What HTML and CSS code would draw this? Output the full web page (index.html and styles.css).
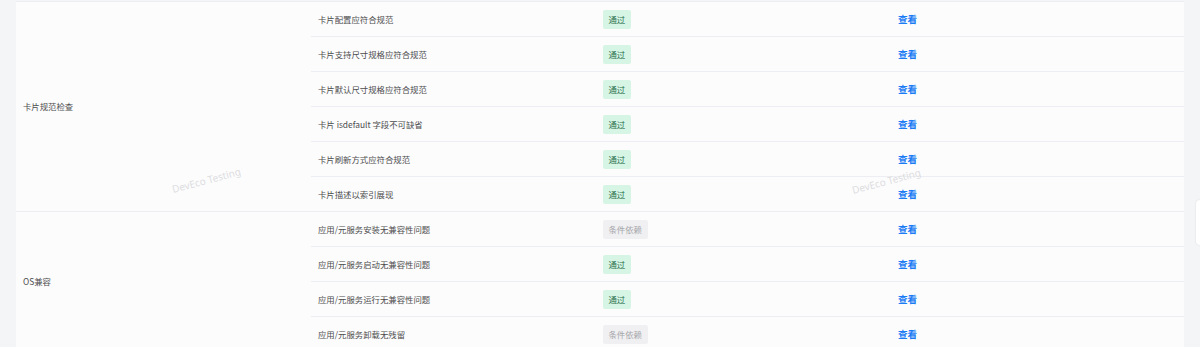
FILE: index.html
```html
<!DOCTYPE html>
<html lang="zh">
<head>
<meta charset="utf-8">
<link rel="stylesheet" href="styles.css">
</head>
<body>
<div class="page">
  <div class="table">
    <div class="group">
      <div class="group-label">卡片规范检查</div>
      <div class="rows">
        <div class="row"><div class="c-name">卡片配置应符合规范</div><div class="c-status"><span class="badge pass">通过</span></div><div class="c-act"><a class="link">查看</a></div></div>
        <div class="row"><div class="c-name">卡片支持尺寸规格应符合规范</div><div class="c-status"><span class="badge pass">通过</span></div><div class="c-act"><a class="link">查看</a></div></div>
        <div class="row"><div class="c-name">卡片默认尺寸规格应符合规范</div><div class="c-status"><span class="badge pass">通过</span></div><div class="c-act"><a class="link">查看</a></div></div>
        <div class="row"><div class="c-name">卡片 isdefault 字段不可缺省</div><div class="c-status"><span class="badge pass">通过</span></div><div class="c-act"><a class="link">查看</a></div></div>
        <div class="row"><div class="c-name">卡片刷新方式应符合规范</div><div class="c-status"><span class="badge pass">通过</span></div><div class="c-act"><a class="link">查看</a></div></div>
        <div class="row"><div class="c-name">卡片描述以索引展现</div><div class="c-status"><span class="badge pass">通过</span></div><div class="c-act"><a class="link">查看</a></div></div>
      </div>
    </div>
    <div class="group">
      <div class="group-label">OS兼容</div>
      <div class="rows">
        <div class="row"><div class="c-name">应用/元服务安装无兼容性问题</div><div class="c-status"><span class="badge cond">条件依赖</span></div><div class="c-act"><a class="link">查看</a></div></div>
        <div class="row"><div class="c-name">应用/元服务启动无兼容性问题</div><div class="c-status"><span class="badge pass">通过</span></div><div class="c-act"><a class="link">查看</a></div></div>
        <div class="row"><div class="c-name">应用/元服务运行无兼容性问题</div><div class="c-status"><span class="badge pass">通过</span></div><div class="c-act"><a class="link">查看</a></div></div>
        <div class="row"><div class="c-name">应用/元服务卸载无残留</div><div class="c-status"><span class="badge cond">条件依赖</span></div><div class="c-act"><a class="link">查看</a></div></div>
      </div>
    </div>
    <span class="watermark wm1">DevEco Testing</span>
    <span class="watermark wm2">DevEco Testing</span>
  </div>
  <div class="scroll-thumb"></div>
</div>
</body>
</html>
```

FILE: styles.css
```css
* { box-sizing: border-box; }
html, body {
  margin: 0;
  padding: 0;
  height: 347px;
  overflow: hidden;
  background: #f4f5f7;
  font-family: "Noto Sans CJK SC", "Noto Sans", sans-serif;
}
.page {
  position: relative;
  padding: 1px 16px 0 16px;
  height: 347px;
}
.table {
  position: relative;
  background: #fcfcfd;
  border-top: 1px solid #eceef3;
  width: 1168px;
}
.group {
  display: flex;
  border-bottom: 1px solid #eceef3;
}
.group-label {
  width: 295px;
  flex: none;
  display: flex;
  align-items: center;
  padding-left: 7px;
  padding-bottom: 2px;
  font-size: 8.4px;
  line-height: 12px;
  color: #4d4d4d;
}
.rows {
  flex: 1;
  display: flex;
  flex-direction: column;
}
.row {
  display: flex;
  height: 35px;
  flex: none;
  align-items: center;
  border-bottom: 1px solid #eceef3;
}
.row:last-child {
  height: 34px;
  border-bottom: none;
}
.c-name {
  width: 285px;
  padding-left: 7px;
  font-size: 8.4px;
  line-height: 12px;
  color: #4d4d4d;
}
.c-status {
  width: 295px;
  padding-left: 7px;
  display: flex;
}
.c-act {
  flex: 1;
  padding-left: 7px;
  display: flex;
  align-items: center;
}
.badge {
  display: inline-flex;
  align-items: center;
  height: 19px;
  padding: 0 5.5px;
  border-radius: 2px;
  font-size: 8.4px;
  line-height: 12px;
}
.badge.pass {
  background: #d6f5e5;
  color: #2a6f4c;
}
.badge.cond {
  background: #f0f0f2;
  color: #a7a7ab;
}
.link {
  font-size: 9.6px;
  line-height: 12px;
  font-weight: 700;
  color: #1c7cf4;
  cursor: pointer;
}
.watermark {
  position: absolute;
  font-family: "Noto Sans", sans-serif;
  font-size: 10px;
  color: #dcdde0;
  transform: rotate(-15deg);
  white-space: nowrap;
  pointer-events: none;
}
.wm1 { left: 155px; top: 171px; }
.wm2 { left: 835px; top: 172px; }
.scroll-thumb {
  position: absolute;
  right: -4px;
  top: 200px;
  width: 8px;
  height: 45px;
  border-radius: 4px;
  background: #ffffff;
  box-shadow: 0 0 2px rgba(0,0,0,0.12);
}
```
